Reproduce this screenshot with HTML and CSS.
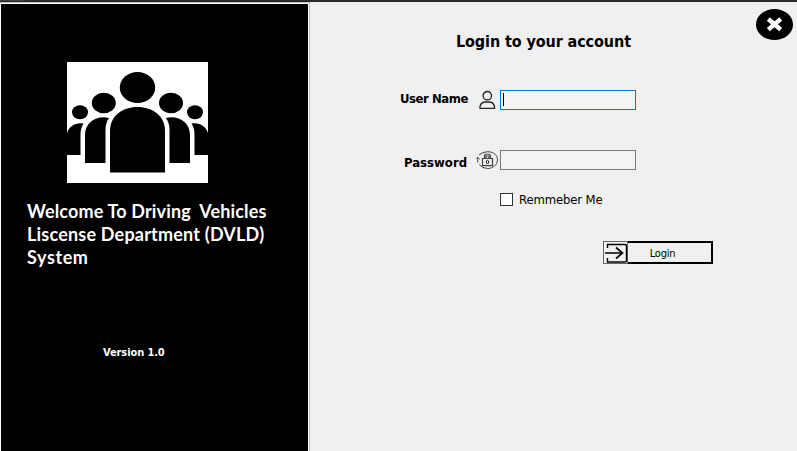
FILE: index.html
```
<!DOCTYPE html>
<html lang="en">
<head>
<meta charset="utf-8">
<title>Login</title>
<link rel="stylesheet" href="styles.css">
</head>
<body>
<div class="window">
  <div class="titlebar"><div class="titlebar-tab"></div></div>
  <div class="content">
    <aside class="brand">
      <svg class="logo" viewBox="0 0 141 121" width="141" height="121">
        <rect width="141" height="121" fill="#fff"/>
        <ellipse cx="13" cy="50.200" rx="8" ry="7"/>
        <ellipse cx="128" cy="50.200" rx="8" ry="7"/>
        <ellipse cx="36.800" cy="41" rx="12" ry="10.300"/>
        <ellipse cx="104" cy="41" rx="12" ry="10.300"/>
        <ellipse cx="70.500" cy="25.500" rx="17.700" ry="15.500"/>
        <path d="M0 93V71C2 64 9 60 16.500 61.500C14.500 65 13.500 68 13.500 73V93Z"/>
        <path d="M141 93V71C139 64 132 60 124.500 61.500C126.500 65 127.500 68 127.500 73V93Z"/>
        <path d="M18 101V73C18 60 30 53 42 56C39.500 60 38.500 63 38.500 68V101Z"/>
        <path d="M123 101V73C123 60 111 53 99 56C101.500 60 102.500 63 102.500 68V101Z"/>
        <path d="M43 110.500V69C43 54 55 45 70.500 45S98 54 98 69V110.500Z"/>
      </svg>
      <h1 class="welcome"><span class="line-a">Welcome To Driving&nbsp; Vehicles</span><br><span class="line-b">Liscense Department (DVLD)</span><br>System</h1>
      <p class="version">Version 1.0</p>
    </aside>
    <main class="login">
      <button class="close" aria-label="Close">
        <svg viewBox="0 0 37 31" width="37" height="31">
          <ellipse cx="18.500" cy="15.500" rx="18.500" ry="15.500"/>
          <path d="M12.300 10L24.700 20.600M24.700 10L12.300 20.600" stroke="#fff" stroke-width="4.500"/>
        </svg>
      </button>
      <h2 class="heading">Login to your account</h2>
      <form class="form">
        <div class="row">
          <label class="label user-label">User Name</label>
          <svg class="icon" viewBox="0 0 24 20" width="24" height="20" fill="none" stroke="#222" stroke-width="1.300">
            <circle cx="11.300" cy="5.700" r="4.200"/>
            <path d="M4 18.300V16.500Q5 12 9.500 12H13Q17.500 12 18.500 16.500V18.300Z"/>
          </svg>
          <div class="field focused"><i class="caret"></i></div>
        </div>
        <div class="row">
          <label class="label pass-label">Password</label>
          <svg class="icon" viewBox="0 0 24 20" width="24" height="20" fill="none" stroke="#444" stroke-width="1">
            <path d="M3 5Q6 2 11.500 1.700C18 1.700 21.500 5.500 21.500 10S17 18.500 11.500 18.500Q6 18.300 3.200 14.500M2 12.500Q1 9.500 2 7.500M.5 8.500L2 7.500L3.500 9.500"/>
            <path d="M6.500 8.500H16.500V15.700H6.500ZM8.500 8V6Q8.500 4 11.500 4T14.500 6V8M10 8V6H13V8" stroke-width="1.200"/>
            <ellipse cx="11.500" cy="12" rx="1.200" ry="1.700" stroke="#222"/>
          </svg>
          <div class="field"></div>
        </div>
        <label class="remember"><span class="checkbox"></span><span class="remember-text">Remmeber Me</span></label>
        <button class="submit" type="button">
          <svg class="enter" viewBox="0 0 25 23" width="25" height="23" fill="none">
            <rect x=".5" y=".5" width="24" height="22" fill="#f0f0f0" stroke="#646464"/>
            <path d="M4.500 7V3.500H22Q23.500 3.500 23.500 5V19.500Q23.500 21 22 21H4.500V17" stroke="#000" stroke-width="1.400"/>
            <path d="M2 12H19M13 6.500L19.500 12L13 17.500" stroke="#000" stroke-width="1.700"/>
          </svg>
          <span class="submit-text">Login</span>
        </button>
      </form>
    </main>
  </div>
</div>
</body>
</html>
```

FILE: styles.css
```
* { box-sizing: border-box; }
body { margin: 0; background: #f0f0f0; color: #000; font-family: "DejaVu Sans Condensed", "DejaVu Sans", sans-serif; font-stretch: condensed; }
h1, h2, p { margin: 0; }
button { padding: 0; border: 0; background: none; font: inherit; color: inherit; }
svg { display: block; flex: none; }
.window { width: 797px; height: 451px; overflow: hidden; }
.titlebar { height: 2px; background: #2b2a2b; }
.titlebar-tab { width: 25px; height: 1px; background: #444348; }
.content { display: grid; grid-template-columns: 310px 1fr; height: 449px; }
.brand { border-top: 1px solid #c0c0c0; border-right: 1px solid #c0c0c0; padding: 59px 0 0 27px; background: #000; box-shadow: inset 1px 1px #fff, inset -1px 0 #fff; }
.logo { margin-left: 40px; }
.welcome { margin-top: 17px; color: #fff; font: 700 18px/23px Lato, sans-serif; white-space: nowrap; letter-spacing: .6px; }
.line-a { letter-spacing: .15px; }
.line-b { letter-spacing: .2px; }
.version { margin: 77px 0 0 76px; color: #fff; font-size: 11px; line-height: 14px; font-weight: 700; letter-spacing: -.1px; }
.login { position: relative; }
.close { position: absolute; right: 4px; top: 7px; }
.heading { padding: 29px 0 0 146px; font-size: 16px; line-height: 22px; font-weight: 700; letter-spacing: -.1px; white-space: nowrap; }
.form { padding: 37px 0 0 90px; }
.row { display: flex; align-items: center; height: 20px; margin-bottom: 40px; }
.label { width: 76px; font-size: 13px; line-height: 20px; font-weight: 700; white-space: nowrap; }
.user-label { margin-top: -3px; letter-spacing: -.45px; }
.pass-label { padding-left: 4px; margin-top: 5px; }
.field { width: 136px; height: 20px; border: 1px solid #7a7a7a; background: #f4f4f4; }
.focused { border-color: #0078d7; padding: 2px; }
.caret { display: block; width: 1px; height: 13px; background: #000; }
.remember { display: flex; align-items: center; gap: 6px; height: 18px; margin: -20px 0 0 100px; font-size: 13px; }
.remember-text { padding-top: 1px; letter-spacing: -.15px; }
.checkbox { width: 13px; height: 13px; border: 1px solid #333; background: #fff; }
.submit { display: flex; width: 110px; height: 23px; margin: 33px 0 0 203px; }
.submit-text { flex: 1; height: 23px; border: 2px solid #000; border-left: 0; padding: 1px 14px 0 0; font-size: 11px; line-height: 19px; letter-spacing: -.2px; }
```
